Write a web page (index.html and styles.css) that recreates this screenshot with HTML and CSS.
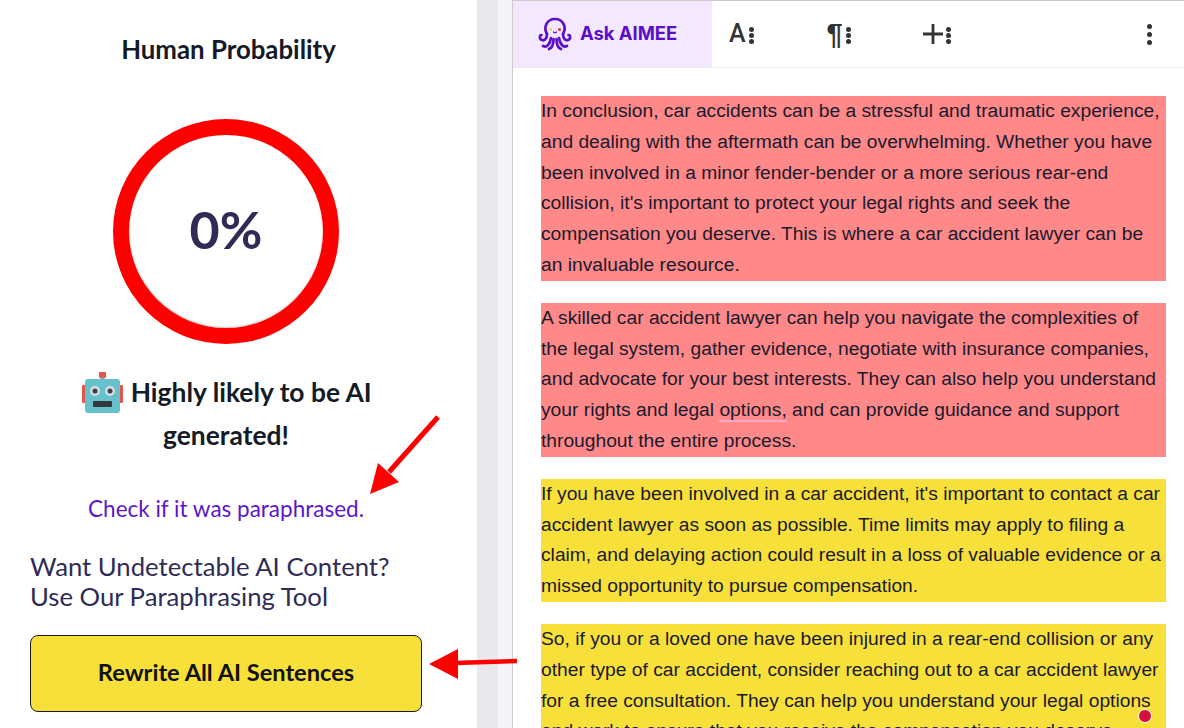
FILE: index.html
```html
<!DOCTYPE html>
<html lang="en">
<head>
  <meta charset="UTF-8">
  <meta name="viewport" content="width=device-width, initial-scale=1">
  <title>Human Probability</title>
  <link rel="stylesheet" href="styles.css">
</head>
<body>
  <div class="page">
    <aside class="score">
      <h2 class="score-title">Human Probability</h2>
      <div class="ring"><span>0%</span></div>
      <p class="verdict">
        <svg class="robot" width="42" height="42" viewBox="0 0 42 42">
          <rect x="17" y="0" width="7" height="6" rx="1" fill="#e2574c"/>
          <rect x="18.500" y="5" width="4" height="4" fill="#8a9aa0"/>
          <rect x="0" y="13" width="4" height="18" rx="1" fill="#e2574c"/>
          <rect x="37" y="13" width="4" height="18" rx="1" fill="#e2574c"/>
          <rect x="3" y="7" width="35" height="34" rx="3" fill="#66c1cb"/>
          <circle cx="13" cy="19" r="5" fill="#d6dde0"/>
          <circle cx="28" cy="19" r="5" fill="#d6dde0"/>
          <circle cx="13" cy="19" r="2.500" fill="#3a4148"/>
          <circle cx="28" cy="19" r="2.500" fill="#3a4148"/>
          <rect x="11" y="29" width="19" height="6" rx="1" fill="#33393d"/>
        </svg>
        Highly likely to be AI generated!
      </p>
      <a class="check-link" href="#">Check if it was paraphrased.</a>
      <p class="promo">Want Undetectable AI Content?<br>Use Our Paraphrasing Tool</p>
      <button class="rewrite-btn">Rewrite All AI Sentences</button>
    </aside>

    <div class="gutter"></div>

    <main class="editor">
      <nav class="toolbar">
        <div class="ask-tab">
          <svg width="34" height="34" viewBox="0 0 34 34" fill="none" stroke="#5b0fc8" stroke-width="2.700" stroke-linecap="round" stroke-linejoin="round">
            <path d="M9 17 C5 10 9 2 17 2 C25 2 29 10 25 17"/>
            <path d="M9 17 C9 22 6 24 4 23 C1 22 1.500 18 3.500 18"/>
            <path d="M25 17 C25 22 28 24 30 23 C33 22 32.500 18 30.500 18"/>
            <path d="M13 21 C12 27 9 31 5 29"/>
            <path d="M21 21 C22 27 25 31 29 29"/>
            <path d="M15.500 22 C15.500 27 14 31 11 32"/>
            <path d="M18.500 22 C18.500 27 20 31 23 32"/>
            <circle cx="12.500" cy="12.500" r="1.500" fill="#f2d34a" stroke="none"/>
            <circle cx="21.500" cy="12.500" r="1.500" fill="#ee2a2a" stroke="none"/>
            <path d="M15.500 15 Q17 16.500 18.500 15" stroke-width="1.200"/>
          </svg>
          <span>Ask AIMEE</span>
        </div>
        <div class="tool tool-a">A<i class="dots"></i></div>
        <div class="tool tool-p">¶<i class="dots"></i></div>
        <div class="tool tool-plus">
          <svg width="20" height="20" viewBox="0 0 20 20"><path d="M0 10H20M10 0V20" stroke="#333" stroke-width="2.800"/></svg>
          <i class="dots"></i>
        </div>
        <div class="tool-more"><i class="dots dots-big"></i></div>
      </nav>

      <div class="doc">
        <p class="hl-red">In conclusion, car accidents can be a stressful and traumatic experience, and dealing with the aftermath can be overwhelming. Whether you have been involved in a minor fender-bender or a more serious rear-end collision, it's important to protect your legal rights and seek the compensation you deserve. This is where a car accident lawyer can be an invaluable resource.</p>
        <p class="hl-red">A skilled car accident lawyer can help you navigate the complexities of the legal system, gather evidence, negotiate with insurance companies, and advocate for your best interests. They can also help you understand your rights and legal <span class="flagged">options,</span> and can provide guidance and support throughout the entire process.</p>
        <p class="hl-yellow">If you have been involved in a car accident, it's important to contact a car accident lawyer as soon as possible. Time limits may apply to filing a claim, and delaying action could result in a loss of valuable evidence or a missed opportunity to pursue compensation.</p>
        <p class="hl-yellow">So, if you or a loved one have been injured in a rear-end collision or any other type of car accident, consider reaching out to a car accident lawyer for a free consultation. They can help you understand your legal options and work to ensure that you receive the compensation you deserve.</p>
      </div>
    </main>
  </div>

  <svg class="arrows" width="1184" height="728" viewBox="0 0 1184 728">
    <path d="M438 417 L389 472" stroke="#f00" stroke-width="5"/>
    <path d="M370 494 L378 463 L399 482 Z" fill="#f00"/>
    <path d="M517 661 L455 663" stroke="#f00" stroke-width="4.500"/>
    <path d="M429 664 L458 649 L458 679 Z" fill="#f00"/>
  </svg>
  <span class="status-dot"></span>
</body>
</html>
```

FILE: styles.css
```css
* { margin: 0; padding: 0; box-sizing: border-box; }
html, body {
  height: 100%;
  overflow: hidden;
  background: #fff;
}
.page {
  display: flex;
  height: 728px;
}

/* left score panel */
.score {
  width: 477px;
  flex-shrink: 0;
  padding: 33px 55px 0 30px;
  font-family: 'Lato', sans-serif;
  color: #1a1a2e;
}
.score-title {
  width: 397px;
  text-align: center;
  font-size: 25.800px;
  line-height: 32px;
  font-weight: 700;
  color: #141a26;
}
.ring {
  width: 226px;
  height: 225px;
  margin: 54px 0 0 83px;
  padding-bottom: 6px;
  border: 16px solid #f00;
  border-radius: 50%;
  box-shadow: inset 0 -1px 2px #c8c8c8;
  display: flex;
  align-items: center;
  justify-content: center;
}
.ring span {
  font-size: 52px;
  font-weight: 700;
  color: #2f2b56;
}
.verdict {
  width: 392px;
  margin-top: 27px;
  text-align: center;
  font-size: 26.400px;
  line-height: 42px;
  font-weight: 700;
  color: #141a26;
}
.robot {
  vertical-align: -12px;
  margin-left: 2px;
}
.check-link {
  display: block;
  width: 392px;
  margin-top: 38px;
  text-align: center;
  font-size: 22.500px;
  line-height: 30px;
  color: #5b16cc;
  text-decoration: none;
}
.promo {
  margin-top: 27px;
  font-size: 25.700px;
  line-height: 30px;
  color: #2f2b56;
}
.rewrite-btn {
  display: block;
  width: 392px;
  height: 77px;
  margin-top: 24px;
  padding-bottom: 3px;
  background: #f8e03a;
  border: 1px solid #1a1a1a;
  border-radius: 8px;
  font-family: 'Lato', sans-serif;
  font-size: 23.600px;
  font-weight: 700;
  color: #111;
}

/* strip between the panels */
.gutter {
  width: 35px;
  flex-shrink: 0;
  background: linear-gradient(90deg, #e8e8ed 21px, #f5f5f8 21px);
}

/* right editor */
.editor {
  flex: 1;
  min-width: 0;
  border-left: 1px solid #ccc;
  border-top: 1px solid #ccc;
}
.toolbar {
  display: flex;
  align-items: center;
  height: 67px;
  border-bottom: 1px solid #ededed;
  color: #333;
}
.ask-tab {
  display: flex;
  align-items: center;
  gap: 8px;
  width: 199px;
  height: 66px;
  padding-left: 25px;
  background: #f3e8ff;
  font-family: 'Inter', sans-serif;
  font-size: 18.400px;
  font-weight: 700;
  color: #5b0fc8;
}
.ask-tab span { margin-top: -2px; }
.tool {
  display: flex;
  align-items: center;
  gap: 3px;
  font-family: 'Roboto', sans-serif;
  font-size: 25px;
  font-weight: 500;
  line-height: 34px;
}
.tool-a { margin-left: 17px; }
.tool-p {
  margin-left: 73px;
  font-family: 'Liberation Sans', sans-serif;
  font-size: 29px;
  font-weight: 700;
}
.tool-plus { margin-left: 72px; }
.tool-more { margin-left: auto; margin-right: 32px; display: flex; }
.dots {
  display: block;
  width: 5px;
  height: 5px;
  margin-top: 2px;
  border-radius: 50%;
  background: #333;
  box-shadow: 0 -6px 0 #333, 0 6px 0 #333;
}
.dots-big {
  box-shadow: 0 -8px 0 #333, 0 8px 0 #333;
  margin-top: 0;
}

.doc {
  padding: 28px 18px 0 28px;
  font-family: 'Liberation Sans', Arial, sans-serif;
  font-size: 19.230px;
  line-height: 30.800px;
  color: #1a1a2e;
}
.doc p { margin-bottom: 22px; }
.hl-red { background: #ff8888; }
.hl-yellow { background: #f8e03a; }
.flagged { border-bottom: 2px solid #f7a8c8; }

/* things drawn over the screenshot */
.arrows {
  position: absolute;
  left: 0;
  top: 0;
  pointer-events: none;
}
.status-dot {
  position: absolute;
  left: 1138px;
  top: 709px;
  width: 14px;
  height: 14px;
  border-radius: 50%;
  background: #d4113a;
  border: 1px solid #fff;
}
```
